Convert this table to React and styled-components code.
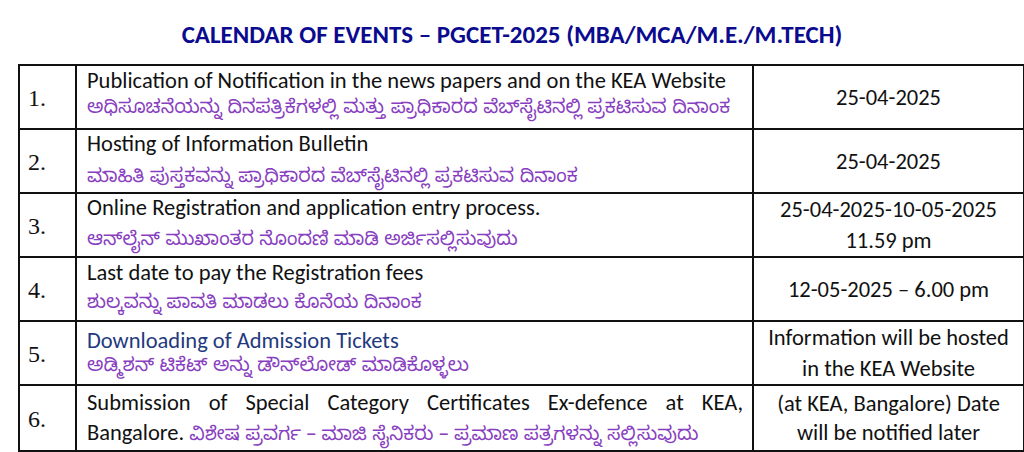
import styled, { createGlobalStyle } from "styled-components";

const GlobalStyle = createGlobalStyle`
  body {
    margin: 0;
    background: #ffffff;
    font-family: Carlito, Calibri, Lato, "Noto Sans", sans-serif;
  }
`;

const Page = styled.div`
  width: 1024px;
  height: 452px;
  overflow: hidden;
  padding-top: 21px;
  box-sizing: border-box;
`;

const Title = styled.h1`
  margin: 0 0 15px;
  text-align: center;
  font-size: 25px;
  line-height: 28px;
  font-weight: 700;
  color: #0b0b8f;
`;

const Table = styled.table`
  margin-left: 18px;
  width: 1005px;
  border-collapse: collapse;
  table-layout: fixed;
  border: 2px solid #111;
`;

const Col = styled.col`
  width: ${(p) => p.w}px;
`;

const Row = styled.tr`
  height: 64px;
`;

const NumCell = styled.td`
  border: 2px solid #111;
  padding: 2px 0 0 8px;
  text-align: left;
  vertical-align: middle;
  font-family: "Liberation Serif", "Times New Roman", serif;
  font-size: 24px;
  color: #111;
`;

const EventCell = styled.td`
  border: 2px solid #111;
  vertical-align: top;
  padding: ${(p) => p.top}px 9px 0 10px;
  font-size: 22.5px;
  color: #111;
`;

const DateCell = styled.td`
  border: 2px solid #111;
  padding: 0;
  text-align: center;
  vertical-align: middle;
  font-size: 22.5px;
  line-height: ${(p) => p.lh || 31}px;
  color: #111;
`;

const English = styled.div`
  line-height: 24px;
  white-space: nowrap;
  color: ${(p) => (p.blue ? "#1f3a7d" : "#111")};
`;

const Justified = styled.div`
  line-height: 24px;
  text-align: justify;
  text-align-last: justify;
`;

const Mixed = styled.div`
  margin-top: ${(p) => p.gap}px;
  line-height: 24px;
  white-space: nowrap;
`;

const Kannada = styled.div`
  margin-top: ${(p) => p.gap}px;
  font-family: "Noto Sans Kannada", "Noto Sans", sans-serif;
  font-size: 19px;
  line-height: 24px;
  white-space: nowrap;
  color: #8840c0;
`;

const KannadaInline = styled.span`
  font-family: "Noto Sans Kannada", "Noto Sans", sans-serif;
  font-size: 19px;
  color: #8840c0;
`;

const events = [
  {
    en: "Publication of Notification in the news papers and on the KEA Website",
    kn: "ಅಧಿಸೂಚನೆಯನ್ನು ದಿನಪತ್ರಿಕೆಗಳಲ್ಲಿ ಮತ್ತು ಪ್ರಾಧಿಕಾರದ ವೆಬ್‌ಸೈಟಿನಲ್ಲಿ ಪ್ರಕಟಿಸುವ ದಿನಾಂಕ",
    date: ["25-04-2025"],
    top: 3,
    gap: 6,
  },
  {
    en: "Hosting of Information Bulletin",
    kn: "ಮಾಹಿತಿ ಪುಸ್ತಕವನ್ನು ಪ್ರಾಧಿಕಾರದ ವೆಬ್‌ಸೈಟಿನಲ್ಲಿ ಪ್ರಕಟಿಸುವ ದಿನಾಂಕ",
    date: ["25-04-2025"],
    top: 2,
    gap: 12,
  },
  {
    en: "Online Registration and application entry process.",
    kn: "ಆನ್‌ಲೈನ್ ಮುಖಾಂತರ ನೊಂದಣಿ ಮಾಡಿ ಅರ್ಜಿಸಲ್ಲಿಸುವುದು",
    date: ["25-04-2025-10-05-2025", "11.59 pm"],
    top: 2,
    gap: 11,
  },
  {
    en: "Last date to pay the Registration fees",
    kn: "ಶುಲ್ಕವನ್ನು ಪಾವತಿ ಮಾಡಲು ಕೊನೆಯ ದಿನಾಂಕ",
    date: ["12-05-2025 – 6.00 pm"],
    top: 3,
    gap: 9,
  },
  {
    en: "Downloading of Admission Tickets",
    kn: "ಅಡ್ಮಿಶನ್ ಟಿಕೆಟ್ ಅನ್ನು ಡೌನ್‌ಲೋಡ್ ಮಾಡಿಕೊಳ್ಳಲು",
    date: ["Information will be hosted", "in the KEA Website"],
    top: 7,
    gap: 4,
    blue: true,
  },
];

export default function App() {
  return (
    <Page>
      <GlobalStyle />
      <Title>CALENDAR OF EVENTS – PGCET-2025 (MBA/MCA/M.E./M.TECH)</Title>
      <Table>
        <colgroup>
          <Col w={57} />
          <Col w={677} />
          <Col w={271} />
        </colgroup>
        <tbody>
          {events.map((ev, i) => (
            <Row key={i}>
              <NumCell>{i + 1}.</NumCell>
              <EventCell top={ev.top}>
                <English blue={ev.blue}>{ev.en}</English>
                <Kannada gap={ev.gap}>{ev.kn}</Kannada>
              </EventCell>
              <DateCell>
                {ev.date.map((d, j) => (
                  <div key={j}>{d}</div>
                ))}
              </DateCell>
            </Row>
          ))}
          <Row>
            <NumCell>6.</NumCell>
            <EventCell top={5}>
              <Justified>
                Submission of Special Category Certificates Ex-defence at KEA,
              </Justified>
              <Mixed gap={6}>
                Bangalore.{" "}
                <KannadaInline>
                  ವಿಶೇಷ ಪ್ರವರ್ಗ – ಮಾಜಿ ಸೈನಿಕರು – ಪ್ರಮಾಣ ಪತ್ರಗಳನ್ನು ಸಲ್ಲಿಸುವುದು
                </KannadaInline>
              </Mixed>
            </EventCell>
            <DateCell lh={29}>
              <div>(at KEA, Bangalore) Date</div>
              <div>will be notified later</div>
            </DateCell>
          </Row>
        </tbody>
      </Table>
    </Page>
  );
}
